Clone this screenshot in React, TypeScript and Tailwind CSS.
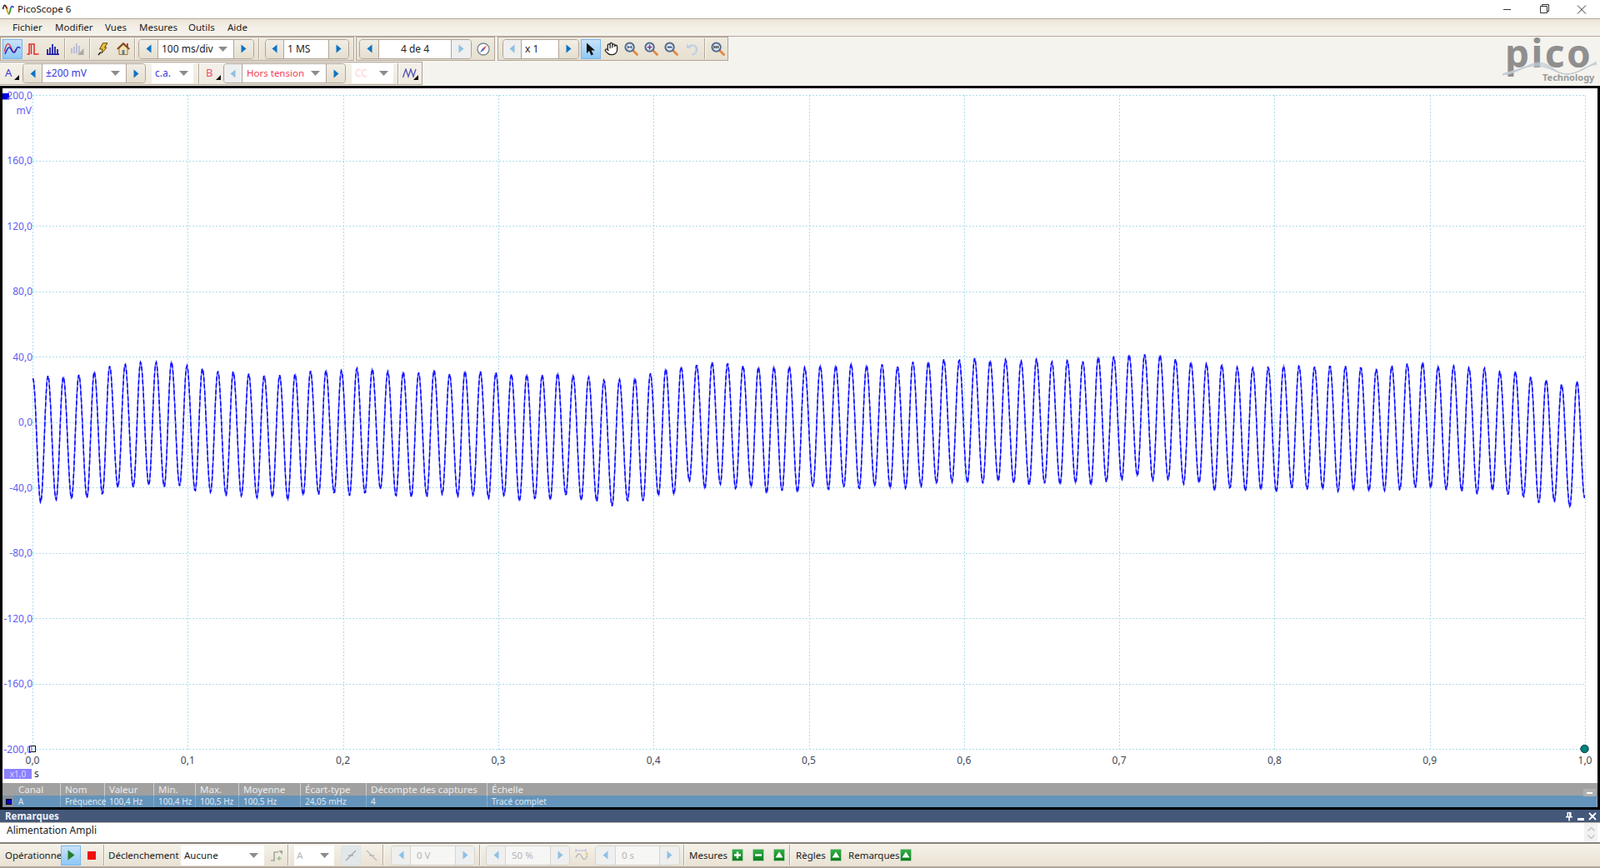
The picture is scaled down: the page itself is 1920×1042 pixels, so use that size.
import type { ReactNode } from 'react'
import { Hand } from 'lucide-react'
import clsx from 'clsx'

/* Enveloppe relevée sur la capture : y = 410 + v / 3 */
const PEAKS = [
  125, 125, 118, 110, 90, 80, 72, 75, 75, 85, 95, 108, 110, 115, 120, 122, 118, 105, 102,
  105, 97, 98, 105, 110, 113, 102, 115, 107, 110, 110, 116, 120, 122, 113, 120, 128, 140, 135, 130, 115, 100, 90,
  82, 75, 80, 87, 90, 92, 92, 92, 85, 87, 82, 85, 80, 90, 75, 72, 62, 66, 62, 68, 62, 70,
  65, 72, 65, 72, 58, 53, 45, 47, 50, 63, 72, 80, 85, 92, 92, 92, 90, 87, 88, 87, 90, 92, 97, 88, 82, 75, 87, 87, 96, 95, 105, 108, 130, 138, 152, 143,
]
const TROUGHS = [
  577, 570, 568, 562, 548, 525, 527, 517, 522, 520, 541, 543, 552, 556, 565, 560, 568, 553, 553, 547,
  553, 547, 533, 557, 558, 558, 552, 558, 552, 565, 558, 575, 565, 570, 556, 572, 574, 592, 577, 575, 553, 550,
  505, 530, 512, 530, 525, 548, 535, 543, 525, 535, 522, 530, 522, 528, 527, 522, 513, 507, 507, 510, 505, 510, 515,
  510, 517, 510, 515, 505, 500, 485, 498, 497, 515, 510, 535, 528, 540, 535, 540, 527, 535, 532, 538, 535, 540, 538, 533, 525, 530, 535, 538, 548, 538, 553, 558, 580, 578, 597,
]
const PERIOD = 18.535

function buildTrace() {
  const knots: [number, number][] = [[39, 410 + 134 / 3]]
  for (let k = 0; k < 100; k++) {
    knots.push([48.3 + PERIOD * k, 410 + TROUGHS[k] / 3])
    knots.push([57 + PERIOD * k, 410 + PEAKS[k] / 3])
  }
  knots.push([1901, 410 + 562 / 3])
  const pts: string[] = []
  let seg = 0
  for (let x = 39; x <= 1901; x += 1) {
    while (seg < knots.length - 2 && knots[seg + 1][0] < x) seg++
    const [x0, y0] = knots[seg]
    const [x1, y1] = knots[seg + 1]
    const t = (x - x0) / (x1 - x0)
    const y = y0 + ((y1 - y0) * (1 - Math.cos(Math.PI * t))) / 2
    const noise = Math.sin(x * 12.9898) * 0.7
    pts.push(`${x + 0.5},${(y + noise).toFixed(1)}`)
  }
  return pts.join(' ')
}

const TRACE = buildTrace()
const GRID_X = Array.from({ length: 11 }, (_, i) => Math.round(39 + 186.3 * i) + 0.5)
const GRID_Y = Array.from({ length: 11 }, (_, i) => Math.round(114 + 78.5 * i) + 0.5)
const Y_LABELS = ['200,0', '160,0', '120,0', '80,0', '40,0', '0,0', '-40,0', '-80,0', '-120,0', '-160,0', '-200,0']
const X_LABELS = ['0,0', '0,1', '0,2', '0,3', '0,4', '0,5', '0,6', '0,7', '0,8', '0,9', '1,0']

function Tri({ dir, ghost = false }: { dir: 'left' | 'right'; ghost?: boolean }) {
  return (
    <svg width="7" height="11" viewBox="0 0 7 11">
      <path
        d={dir === 'left' ? 'M6.5 0.5 L0.5 5.5 L6.5 10.5 Z' : 'M0.5 0.5 L6.5 5.5 L0.5 10.5 Z'}
        fill={ghost ? '#8fbfe4' : '#0b74c6'}
      />
    </svg>
  )
}

function Caret() {
  return (
    <svg width="11" height="6" viewBox="0 0 11 6" className="shrink-0">
      <path d="M0 0 H11 L5.5 6 Z" fill="#8c8c8c" />
    </svg>
  )
}

function SpinBtn({ dir, ghost, className }: { dir: 'left' | 'right'; ghost?: boolean; className: string }) {
  return (
    <div
      className={clsx(
        'flex h-full items-center justify-center',
        ghost ? 'bg-[#eeefee]' : 'bg-gradient-to-b from-[#f1eee6] to-[#e6dfd0]',
        className,
      )}
    >
      <Tri dir={dir} ghost={ghost} />
    </div>
  )
}

function Spinner({
  className,
  leftClass,
  rightClass,
  ghostLeft,
  ghostRight,
  faded,
  children,
}: {
  className: string
  leftClass: string
  rightClass: string
  ghostLeft?: boolean
  ghostRight?: boolean
  faded?: boolean
  children: ReactNode
}) {
  return (
    <div
      className={clsx(
        'flex h-[24px] shrink-0 overflow-hidden rounded-[4px] border',
        faded ? 'border-[#d8d4cc]' : 'border-[#b0a498]',
        className,
      )}
    >
      <SpinBtn dir="left" ghost={ghostLeft} className={clsx(leftClass, 'border-r', faded ? 'border-[#d8d4cc]' : 'border-[#b0a498]')} />
      <div className={clsx('flex min-w-0 flex-1 items-center', faded ? 'bg-[#f6f6f5]' : 'bg-white')}>{children}</div>
      <SpinBtn dir="right" ghost={ghostRight} className={clsx(rightClass, 'border-l', faded ? 'border-[#d8d4cc]' : 'border-[#b0a498]')} />
    </div>
  )
}

function Sep({ className }: { className?: string }) {
  return <div className={clsx('h-[25px] w-[2px] shrink-0 border-l border-r border-l-[#b3a99e] border-r-[#fbfaf7]', className)} />
}

function ToolBtn({ className, active, children }: { className: string; active?: boolean; children: ReactNode }) {
  return (
    <div
      className={clsx(
        'flex h-[24px] shrink-0 items-center justify-center',
        active && 'border border-[#79b8ec] bg-gradient-to-b from-[#c8e3fa] to-[#8dc8f6]',
        className,
      )}
    >
      {children}
    </div>
  )
}

function Lens({ children }: { children?: ReactNode }) {
  return (
    <svg width="17" height="17" viewBox="0 0 17 17">
      <path d="M10 10 L15.5 15.5" stroke="#e2873f" strokeWidth="2.8" strokeLinecap="round" />
      <circle cx="6.6" cy="6.6" r="5.2" fill="#d9e3ef" stroke="#566b8a" strokeWidth="2" />
      {children}
    </svg>
  )
}

function GreenBtn({ children }: { children: ReactNode }) {
  return (
    <svg width="14" height="15" viewBox="0 0 14 15" className="shrink-0">
      <defs>
        <linearGradient id="green-btn" x1="0" y1="0" x2="0" y2="1">
          <stop offset="0%" stopColor="#35b24a" />
          <stop offset="100%" stopColor="#0b7a1c" />
        </linearGradient>
      </defs>
      <rect x="0.5" y="0.5" width="13" height="14" rx="1" fill="url(#green-btn)" stroke="#a9cfa8" />
      {children}
    </svg>
  )
}

const PLUS = <path d="M7 3.5 V11.5 M3 7.5 H11" stroke="#fff" strokeWidth="2.4" />
const MINUS = <path d="M3 7.5 H11" stroke="#fff" strokeWidth="2.4" />
const UP = <path d="M7 3.5 L11.5 10.5 H2.5 Z" fill="#fff" />

function CornerTri() {
  return (
    <svg width="6" height="6" viewBox="0 0 6 6" className="absolute">
      <path d="M6 0 V6 H0 Z" fill="#111" />
    </svg>
  )
}

function AppIcon() {
  return (
    <svg width="14" height="14" viewBox="0 0 14 14" className="ml-[3px] shrink-0">
      <path d="M0.5 7 C1.5 1 3.5 1 4.8 6" fill="none" stroke="#2d2d2d" strokeWidth="1.7" />
      <path d="M4.8 6 C5.6 9 6.4 11 7 12.5" fill="none" stroke="#d6a81f" strokeWidth="1.9" />
      <path d="M7 12.5 C8.2 13.5 9.2 9 9.8 6" fill="none" stroke="#3a9b2e" strokeWidth="1.9" />
      <path d="M9.8 6 C10.6 3 12 3 13.5 5" fill="none" stroke="#3452c4" strokeWidth="1.7" />
      <path d="M4.2 3.2 L6.2 6.6" fill="none" stroke="#d02d2d" strokeWidth="1.2" />
    </svg>
  )
}

function PicoLogo() {
  return (
    <div className="absolute left-[1800px] top-[44px] h-[58px] w-[120px]">
      <div className="absolute left-[6px] top-[-4px] font-['Liberation_Serif',serif] text-[46px] font-bold leading-[46px] tracking-[2.5px] text-[#8f8f8f]">
        pico
      </div>
      <svg width="120" height="20" viewBox="0 0 120 20" className="absolute left-0 top-[28px]">
        {[0, 1, 2, 3, 4, 5, 6].map((i) => (
          <path
            key={i}
            d={`M3 ${18 - i * 0.2} C 22 ${17 - i} 34 ${3 + i * 0.6} 46 ${3 + i * 0.8} C 62 ${3 + i} 66 ${17 - i * 0.2} 80 ${17} C 94 ${17} 104 ${8 - i * 0.4} 116 ${2 + i * 0.6}`}
            fill="none"
            stroke={i % 2 ? '#bcd0e2' : '#c4c8cc'}
            strokeWidth="0.7"
          />
        ))}
      </svg>
      <div className="absolute left-[51px] top-[42px] font-['Liberation_Serif',serif] text-[11px] font-bold leading-[14px] text-[#9a9a9a]">
        Technology
      </div>
    </div>
  )
}

function TopToolbars() {
  return (
    <>
      <div className="flex h-[29px] items-center">
        <div className="flex h-[29px] w-[425px] shrink-0 items-center border border-[#b0a498] bg-gradient-to-b from-[#efeadf] to-[#e7e0d1] pl-[2px]">
          <ToolBtn active className="w-[24px]">
            <svg width="20" height="14" viewBox="0 0 20 14">
              <path d="M0.5 10 C3 -3 6 -1 9 7 C11 12 13 12 14 7" fill="none" stroke="#d93a3a" strokeWidth="1.5" />
              <path d="M1 13 C3 9 4 5 6 5 C9 5 9 12 12 11 C15 10 15 1 19.5 6" fill="none" stroke="#2b2bc0" strokeWidth="1.5" />
            </svg>
          </ToolBtn>
          <ToolBtn className="w-[24px]">
            <svg width="15" height="14" viewBox="0 0 15 14">
              <path d="M0.5 13 H3 V1 H9 V13 H14.5" fill="none" stroke="#e02a2a" strokeWidth="1.5" />
              <path d="M5.5 2 V13" stroke="#e02a2a" strokeWidth="1.5" />
            </svg>
          </ToolBtn>
          <ToolBtn className="w-[25px]">
            <svg width="15" height="14" viewBox="0 0 15 14">
              <path d="M1 7 V13 M4 5 V13 M7 1 V13 M10 4 V13 M13 7 V13 M0 13.3 H15" stroke="#1717a8" strokeWidth="1.7" />
            </svg>
          </ToolBtn>
          <Sep className="ml-[1px]" />
          <ToolBtn className="w-[28px]">
            <svg width="16" height="15" viewBox="0 0 16 15">
              <path d="M1 7 V13 M4 5 V13 M7 1 V13 M10 4 V13" stroke="#b7b8d8" strokeWidth="1.7" />
              <path d="M15.5 7 V15 H8 Z" fill="#a9a9a9" />
            </svg>
          </ToolBtn>
          <Sep />
          <ToolBtn className="ml-[2px] w-[24px]">
            <svg width="13" height="16" viewBox="0 0 13 16">
              <path d="M6.5 0.8 H12 L8.5 6 H11 L5 13 L6 8 H2.5 Z" fill="#f0c030" stroke="#5a4312" strokeWidth="1" />
              <path d="M1 15 L4 11.5" stroke="#222" strokeWidth="1.6" />
            </svg>
          </ToolBtn>
          <ToolBtn className="w-[25px]">
            <svg width="16" height="15" viewBox="0 0 16 15">
              <path d="M12 1 H13.7 V5 H12 Z" fill="#c72525" />
              <path d="M3 7 V14.5 H13 V7 L8 2.5 Z" fill="#f2e3b8" stroke="#a8722a" />
              <path d="M0.8 8 L8 1 L15.2 8" fill="none" stroke="#7a4a1c" strokeWidth="1.8" />
              <path d="M6.5 9 H9.5 V14.5 H6.5 Z" fill="#5f7f9f" />
            </svg>
          </ToolBtn>
          <Sep className="ml-[1px]" />
          <Spinner className="ml-[3px] w-[139px]" leftClass="w-[23px]" rightClass="w-[24px]">
            <span className="ml-[4px] flex-1 text-[12px] text-[#222]">100 ms/div</span>
            <span className="mr-[7px]"><Caret /></span>
          </Spinner>
          <Sep className="ml-[5px]" />
          <Spinner className="ml-[6px] w-[101px]" leftClass="w-[22px]" rightClass="w-[24px]">
            <span className="ml-[4px] text-[12px] text-[#222]">1 MS</span>
          </Spinner>
        </div>
        <div className="ml-[2px] flex h-[29px] w-[167px] shrink-0 items-center border border-[#b0a498] bg-gradient-to-b from-[#efeadf] to-[#e7e0d1] pl-[3px]">
          <Spinner className="w-[135px]" leftClass="w-[23px]" rightClass="w-[24px]" ghostRight>
            <span className="w-full text-center text-[12px] text-[#222]">4 de 4</span>
          </Spinner>
          <svg width="16" height="16" viewBox="0 0 16 16" className="ml-[6px]">
            <circle cx="8" cy="8" r="7" fill="#fdfdfd" stroke="#7d8590" strokeWidth="1.4" />
            <path d="M12 3.8 L7 7 L9 9 Z" fill="#d9403a" />
            <path d="M4 12.2 L7 7 L9 9 Z" fill="#3a62c0" />
          </svg>
        </div>
        <div className="ml-[3px] flex h-[29px] w-[277px] shrink-0 items-center border border-[#b0a498] bg-gradient-to-b from-[#efeadf] to-[#e7e0d1] pl-[5px]">
          <Spinner className="w-[92px]" leftClass="w-[22px]" rightClass="w-[24px]" ghostLeft>
            <span className="ml-[4px] text-[12px] text-[#222]">x 1</span>
          </Spinner>
          <ToolBtn active className="ml-[2px] w-[24px]">
            <svg width="12" height="16" viewBox="0 0 12 16">
              <path d="M1 0.5 V13 L4 10 L6.5 15.5 L9 14.3 L6.5 9.5 H11 Z" fill="#111" />
            </svg>
          </ToolBtn>
          <ToolBtn className="w-[24px]">
            <Hand size={17} className="fill-white text-[#222]" strokeWidth={1.8} />
          </ToolBtn>
          <ToolBtn className="w-[24px]">
            <Lens><path d="M4.5 6.6 H8.7 M4.5 5 V8.2 M8.7 5 V8.2" stroke="#2c4a7a" strokeWidth="1" /></Lens>
          </ToolBtn>
          <ToolBtn className="w-[24px]">
            <Lens><path d="M3.8 6.6 H9.4 M6.6 3.8 V9.4" stroke="#7a2f8a" strokeWidth="1.4" /></Lens>
          </ToolBtn>
          <ToolBtn className="w-[25px]">
            <Lens><path d="M3.8 6.6 H9.4" stroke="#2c4a7a" strokeWidth="1.6" /></Lens>
          </ToolBtn>
          <ToolBtn className="w-[24px]">
            <svg width="16" height="16" viewBox="0 0 16 16">
              <path d="M2 1.5 V7 H7.5 Z" fill="#bfd0e4" />
              <path d="M4 6 C7 2 14 3 14 8.5 C14 11.5 11.5 14 8.5 14.5" fill="none" stroke="#bfd0e4" strokeWidth="2.4" />
            </svg>
          </ToolBtn>
          <Sep className="ml-[3px]" />
          <ToolBtn className="w-[28px]">
            <Lens><path d="M3.5 6.6 H9.7" stroke="#222" strokeWidth="3" strokeDasharray="1.2 1" /></Lens>
          </ToolBtn>
        </div>
      </div>
      <div className="mt-[1px] flex h-[28px] w-[507px] items-center border border-[#b0a498] border-l-0 bg-gradient-to-b from-[#f4f1ea] to-[#efeadf]">
        <div className="relative flex h-full w-[27px] shrink-0 items-center pl-[6px] text-[13px] text-[#3a3ad6]">
          A
          <span className="absolute left-[17px] top-[15px]"><CornerTri /></span>
        </div>
        <Spinner className="w-[148px]" leftClass="w-[23px]" rightClass="w-[23px]">
          <span className="ml-[4px] flex-1 text-[12px] text-[#3a3ad6]">±200 mV</span>
          <span className="mr-[7px]"><Caret /></span>
        </Spinner>
        <div className="ml-[7px] flex h-[24px] w-[50px] shrink-0 items-center justify-between bg-white pl-[4px] pr-[6px] text-[12px] text-[#3a3ad6]">
          c.a.
          <Caret />
        </div>
        <Sep className="ml-[6px]" />
        <div className="relative flex h-full w-[28px] shrink-0 items-center pl-[7px] text-[13px] text-[#f0506a]">
          B
          <span className="absolute left-[19px] top-[15px]"><CornerTri /></span>
        </div>
        <Spinner className="w-[147px]" leftClass="w-[22px]" rightClass="w-[23px]" ghostLeft>
          <span className="ml-[5px] flex-1 text-[11.5px] text-[#f03a55]">Hors tension</span>
          <span className="mr-[7px]"><Caret /></span>
        </Spinner>
        <div className="ml-[7px] flex h-[24px] w-[50px] shrink-0 items-center justify-between bg-white pl-[4px] pr-[6px] text-[12px] text-[#fbd4d4]">
          CC
          <Caret />
        </div>
        <Sep className="ml-[5px]" />
        <div className="relative flex h-full w-[28px] items-center justify-center">
          <svg width="19" height="12" viewBox="0 0 19 12">
            <path d="M0.5 11 L4 1 L7 10 L10 1 L13 10 L16 1" fill="none" stroke="#5a5ab8" strokeWidth="1.4" />
          </svg>
          <span className="absolute left-[17px] top-[15px]"><CornerTri /></span>
        </div>
      </div>
    </>
  )
}

const COLUMNS = [
  { label: 'Canal', value: 'A', cls: 'w-[70px] pl-[19px]' },
  { label: 'Nom', value: 'Fréquence', cls: 'w-[53px] pl-[5px]' },
  { label: 'Valeur', value: '100,4 Hz', cls: 'w-[59px] pl-[5px]' },
  { label: 'Min.', value: '100,4 Hz', cls: 'w-[50px] pl-[5px]' },
  { label: 'Max.', value: '100,5 Hz', cls: 'w-[52px] pl-[5px]' },
  { label: 'Moyenne', value: '100,5 Hz', cls: 'w-[74px] pl-[5px]' },
  { label: 'Écart-type', value: '24,05 mHz', cls: 'w-[79px] pl-[5px]' },
  { label: 'Décompte des captures', value: '4', cls: 'w-[145px] pl-[5px]' },
  { label: 'Échelle', value: 'Tracé complet', cls: 'flex-1 pl-[5px]' },
]

function Chart() {
  return (
    <div className="absolute left-0 top-[103px] h-[869px] w-[1920px] border-x-[3px] border-y-[3px] border-black bg-white">
      {/* coordonnées de page : on retire le cadre */}
      <svg width="1920" height="1042" viewBox="0 0 1920 1042" className="absolute left-[-3px] top-[-106px]">
        {GRID_X.map((x) => (
          <line key={x} x1={x} x2={x} y1="114" y2="900" stroke="#aedcec" strokeDasharray="2 2" />
        ))}
        {GRID_Y.map((y) => (
          <line key={y} x1="39" x2="1902" y1={y} y2={y} stroke="#aedcec" strokeDasharray="2 2" />
        ))}
        <polyline points={TRACE} fill="none" stroke="#6262ff" strokeWidth="1.5" />
        <polyline points={TRACE} fill="none" stroke="#0000ff" strokeWidth="1.4" strokeDasharray="5 3" />
        <rect x="3" y="112" width="8" height="7.5" fill="#0000e8" />
        <rect x="35.5" y="895.5" width="7" height="7" fill="#fff" stroke="#111" />
        <circle cx="1901.5" cy="899" r="4.7" fill="#00807c" stroke="#103c3c" />
      </svg>
      {Y_LABELS.map((l, i) => (
        <div
          key={l}
          className="absolute w-[36px] whitespace-nowrap text-right text-[12px] leading-[14px] text-[#5f5cf5]"
          style={{ left: 0, top: 114 + 78.5 * i - 6.5 - 106 }}
        >
          {l}
        </div>
      ))}
      <div className="absolute left-0 top-[20px] w-[35px] text-right text-[12px] leading-[14px] text-[#5f5cf5]">mV</div>
      {X_LABELS.map((l, i) => (
        <div
          key={l}
          className="absolute w-[40px] text-center text-[12px] leading-[14px] text-[#3e4658]"
          style={{ left: 39 + 186.3 * i - 23, top: 800 }}
        >
          {l}
        </div>
      ))}
      <div className="absolute left-[2px] top-[817px] flex h-[12px] w-[33px] items-center justify-center bg-[#8b80ff] text-[10px] text-[#dcd8ff]">x1,0</div>
      <div className="absolute left-[38px] top-[816px] text-[12px] leading-[14px] text-[#333]">s</div>
      <div className="absolute bottom-0 left-0 right-0 h-[29px]">
        <div className="flex h-[15px] bg-[#a0a0a0] text-[11.5px] leading-[15px] text-[#ececec]">
          {COLUMNS.map((c) => (
            <div key={c.label} className={clsx('h-full shrink-0 border-r border-[#d0d0d0] last:border-r-0', c.cls)}>{c.label}</div>
          ))}
        </div>
        <div className="relative flex h-[14px] bg-[#6494bb] text-[10px] leading-[15px] text-[#dfe8f2]">
          {COLUMNS.map((c) => (
            <div key={c.label} className={clsx('h-full shrink-0 border-r border-[#88aecb] last:border-r-0', c.cls)}>{c.value}</div>
          ))}
          <div className="absolute left-0 top-0 flex h-full w-[14px] items-center justify-center bg-[#8490a0]">
            <div className="h-[7px] w-[7px] border border-black bg-[#0000d8]" />
          </div>
        </div>
        <div className="absolute right-[2px] top-[7px] flex h-[9px] w-[15px] items-center justify-center bg-[#b0b0b0]">
          <div className="h-[2px] w-[7px] bg-white" />
        </div>
      </div>
    </div>
  )
}

function Remarks() {
  return (
    <div className="absolute left-0 top-[972px] h-[41px] w-[1920px]">
      <div className="flex h-[15px] items-center justify-between bg-[#44587a] pl-[6px] pr-[4px] pt-[1px] text-[11.5px] font-bold text-[#eef1f6]">
        Remarques
        <div className="flex items-center gap-[5px]">
          <svg width="10" height="12" viewBox="0 0 10 12"><path d="M2.5 1 H7.5 V6 H9 V7.5 H5.8 V11.5 H4.2 V7.5 H1 V6 H2.5 Z M4 2.3 V6 H5 V2.3 Z" fill="#fff" fillRule="evenodd" /></svg>
          <svg width="8" height="10" viewBox="0 0 8 10"><rect y="7" width="8" height="3" fill="#fff" /></svg>
          <svg width="10" height="10" viewBox="0 0 10 10"><path d="M1 1 L9 9 M9 1 L1 9" stroke="#fff" strokeWidth="1.8" /></svg>
        </div>
      </div>
      <div className="relative flex h-[24px] items-center border-t border-[#c0b4a8] bg-white pb-[5px] pl-[8px] text-[12px] text-[#222]">
        Alimentation Ampli
        <div className="absolute right-[3px] top-0 flex h-full w-[16px] flex-col items-center justify-center gap-[4px] bg-[#f2f2f2]">
          <svg width="9" height="5" viewBox="0 0 9 5"><path d="M0.5 4.5 L4.5 0.5 L8.5 4.5" fill="none" stroke="#c4c4c4" strokeWidth="1.4" /></svg>
          <svg width="9" height="5" viewBox="0 0 9 5"><path d="M0.5 0.5 L4.5 4.5 L8.5 0.5" fill="none" stroke="#c4c4c4" strokeWidth="1.4" /></svg>
        </div>
      </div>
      <div className="h-[2px] bg-[#86817b]" />
    </div>
  )
}

function BottomBar() {
  return (
    <div className="absolute left-0 top-[1013px] flex h-[29px] w-[1920px] items-center border-b-2 border-[#b0a498] bg-gradient-to-b from-[#f5f2ea] to-[#e9e2d3] pl-[6px] text-[11.5px] text-[#222]">
      <span className="w-[67px] shrink-0">Opérationnel</span>
      <ToolBtn active className="w-[24px]">
        <svg width="9" height="13" viewBox="0 0 9 13"><path d="M0.5 0.5 L8.5 6.5 L0.5 12.5 Z" fill="#237c23" /></svg>
      </ToolBtn>
      <div className="ml-[8px] h-[10px] w-[10px] shrink-0 bg-[#f01010]" />
      <Sep className="ml-[9px]" />
      <span className="ml-[4px] w-[87px] shrink-0">Déclenchement</span>
      <div className="flex h-[24px] w-[100px] shrink-0 items-center justify-between bg-white pl-[4px] pr-[7px]">
        Aucune
        <Caret />
      </div>
      <svg width="16" height="14" viewBox="0 0 16 14" className="ml-[7px] shrink-0">
        <path d="M1 13 H5 V3 H10" fill="none" stroke="#a5a5a5" strokeWidth="1.6" />
        <path d="M10 1 L15 1 L15 6 Z" fill="#a5a5a5" />
        <path d="M11 8 V13 M8.5 10.5 H13.5" stroke="#8fbf8f" strokeWidth="1.3" />
      </svg>
      <Sep className="ml-[5px]" />
      <div className="ml-[6px] flex h-[24px] w-[48px] shrink-0 items-center justify-between bg-white pl-[3px] pr-[6px] text-[#b4b4b4]">
        A
        <Caret />
      </div>
      <div className="ml-[8px] flex h-[24px] w-[24px] shrink-0 items-center justify-center border border-[#dde3e6] bg-[#e2e8ea]">
        <svg width="14" height="14" viewBox="0 0 14 14"><path d="M1 13 L13 1 M4 7 H10" stroke="#a8a8ac" strokeWidth="1.4" /></svg>
      </div>
      <svg width="14" height="14" viewBox="0 0 14 14" className="ml-[6px] shrink-0"><path d="M1 1 L13 13 M4 7 H10" stroke="#b8b8bc" strokeWidth="1.4" /></svg>
      <Sep className="ml-[6px]" />
      <Spinner faded className="ml-[8px] w-[101px]" leftClass="w-[23px]" rightClass="w-[23px]" ghostLeft ghostRight>
        <span className="ml-[7px] text-[#b5b5b5]">0 V</span>
      </Spinner>
      <Sep className="ml-[5px]" />
      <Spinner faded className="ml-[6px] w-[101px]" leftClass="w-[23px]" rightClass="w-[23px]" ghostLeft ghostRight>
        <span className="ml-[7px] text-[#b5b5b5]">50 %</span>
      </Spinner>
      <svg width="17" height="17" viewBox="0 0 17 17" className="ml-[6px] shrink-0">
        <path d="M1 12 C3 6 6 6 8 10 C10 15 12 15 15 9" fill="none" stroke="#b7b7b7" strokeWidth="1.3" />
        <path d="M1 3 H13 M1 1 V5 M13 1 V5" stroke="#b9b9e0" strokeWidth="1" />
        <circle cx="14" cy="7" r="1.5" fill="#e5c877" />
      </svg>
      <Spinner faded className="ml-[7px] w-[102px]" leftClass="w-[24px]" rightClass="w-[24px]" ghostLeft ghostRight>
        <span className="ml-[7px] text-[#b5b5b5]">0 s</span>
      </Spinner>
      <Sep className="ml-[4px]" />
      <span className="ml-[5px] w-[51px] shrink-0">Mesures</span>
      <GreenBtn>{PLUS}</GreenBtn>
      <span className="ml-[11px]"><GreenBtn>{MINUS}</GreenBtn></span>
      <span className="ml-[11px]"><GreenBtn>{UP}</GreenBtn></span>
      <Sep className="ml-[5px]" />
      <span className="ml-[6px] w-[41px] shrink-0">Règles</span>
      <GreenBtn>{UP}</GreenBtn>
      <span className="ml-[8px] w-[62px] shrink-0">Remarques</span>
      <GreenBtn>{UP}</GreenBtn>
    </div>
  )
}

export default function App() {
  return (
    <div className="relative h-[1042px] w-[1920px] overflow-hidden bg-[#f5f3ee] font-['Roboto',sans-serif]">
      <div className="flex h-[22px] items-center bg-white text-[11.5px] text-[#111]">
        <AppIcon />
        <span className="ml-[4px]">PicoScope 6</span>
        <svg width="100" height="14" viewBox="0 0 100 14" className="ml-auto mr-[16px]">
          <path d="M0 7.5 H9" stroke="#333" />
          <path d="M44.5 3.5 H52.5 V11.5 H44.5 Z M46.5 3.5 V1.5 H54.5 V9.5 H52.5" fill="none" stroke="#333" />
          <path d="M89 2.5 L99 12.5 M99 2.5 L89 12.5" stroke="#333" />
        </svg>
      </div>
      <div className="flex h-[22px] items-center border-y border-[#b3a69a] bg-gradient-to-b from-[#ece5d8] via-[#f3efe6] to-[#f5f2ec] pl-[15px] text-[11.5px] text-[#222]">
        <span className="w-[51px]">Fichier</span>
        <span className="w-[60px]">Modifier</span>
        <span className="w-[41px]">Vues</span>
        <span className="w-[59px]">Mesures</span>
        <span className="w-[47px]">Outils</span>
        <span>Aide</span>
      </div>
      <TopToolbars />
      <PicoLogo />
      <Chart />
      <Remarks />
      <BottomBar />
    </div>
  )
}
